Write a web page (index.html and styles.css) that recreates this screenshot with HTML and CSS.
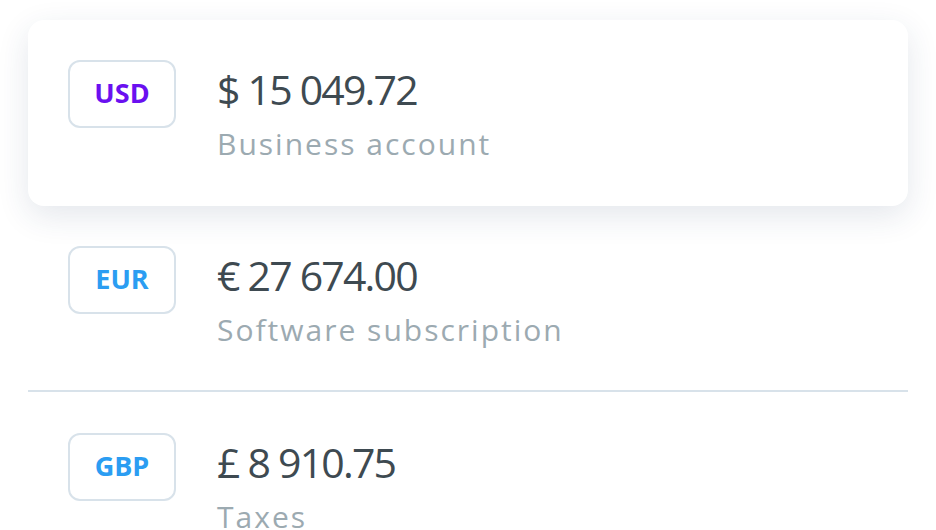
FILE: index.html
```html
<!DOCTYPE html>
<html>
<head>
<meta charset="utf-8">
<link rel="stylesheet" href="styles.css">
</head>
<body>
<div class="list">
  <div class="row row-active">
    <div class="badge badge-purple">USD</div>
    <div class="info">
      <div class="amount">$ 15 049.72</div>
      <div class="label">Business account</div>
    </div>
  </div>
  <div class="row row-before-divider">
    <div class="badge badge-blue">EUR</div>
    <div class="info">
      <div class="amount">€ 27 674.00</div>
      <div class="label">Software subscription</div>
    </div>
  </div>
  <div class="divider"></div>
  <div class="row row-after-divider">
    <div class="badge badge-blue">GBP</div>
    <div class="info">
      <div class="amount">£ 8 910.75</div>
      <div class="label">Taxes</div>
    </div>
  </div>
</div>
</body>
</html>
```

FILE: styles.css
```css
html, body {
  margin: 0;
  padding: 0;
  background: #ffffff;
  overflow: hidden;
}
body {
  font-family: "Open Sans", "Noto Sans", sans-serif;
  width: 936px;
  height: 530px;
}
.list {
  padding: 20px 28px 0;
  display: flex;
  flex-direction: column;
}
.row {
  display: flex;
  align-items: flex-start;
  gap: 41px;
  padding: 40px 40px;
  height: 106px;
  flex-shrink: 0;
}
.row-before-divider {
  padding-bottom: 38px;
}
.row-after-divider {
  padding-top: 41px;
}
.row-active {
  background: #ffffff;
  border-radius: 16px;
  box-shadow: 0 10px 32px rgba(30, 60, 100, 0.12);
}
.divider {
  height: 2px;
  background: #d8e2ea;
  flex-shrink: 0;
}
.badge {
  width: 108px;
  height: 68px;
  box-sizing: border-box;
  border: 2px solid #d8e2ea;
  border-radius: 12px;
  display: flex;
  align-items: center;
  justify-content: center;
  padding-bottom: 4px;
  font-weight: 700;
  font-size: 27px;
  flex-shrink: 0;
}
.badge-purple { color: #6a10f0; }
.badge-blue { color: #2b9df2; }
.info {
  display: flex;
  flex-direction: column;
}
.amount {
  font-size: 41px;
  line-height: 58px;
  color: #3e4a51;
  letter-spacing: -1.8px;
}
.label {
  margin-top: 6px;
  font-size: 30px;
  line-height: 40px;
  color: #9caab1;
  letter-spacing: 2px;
}
```
